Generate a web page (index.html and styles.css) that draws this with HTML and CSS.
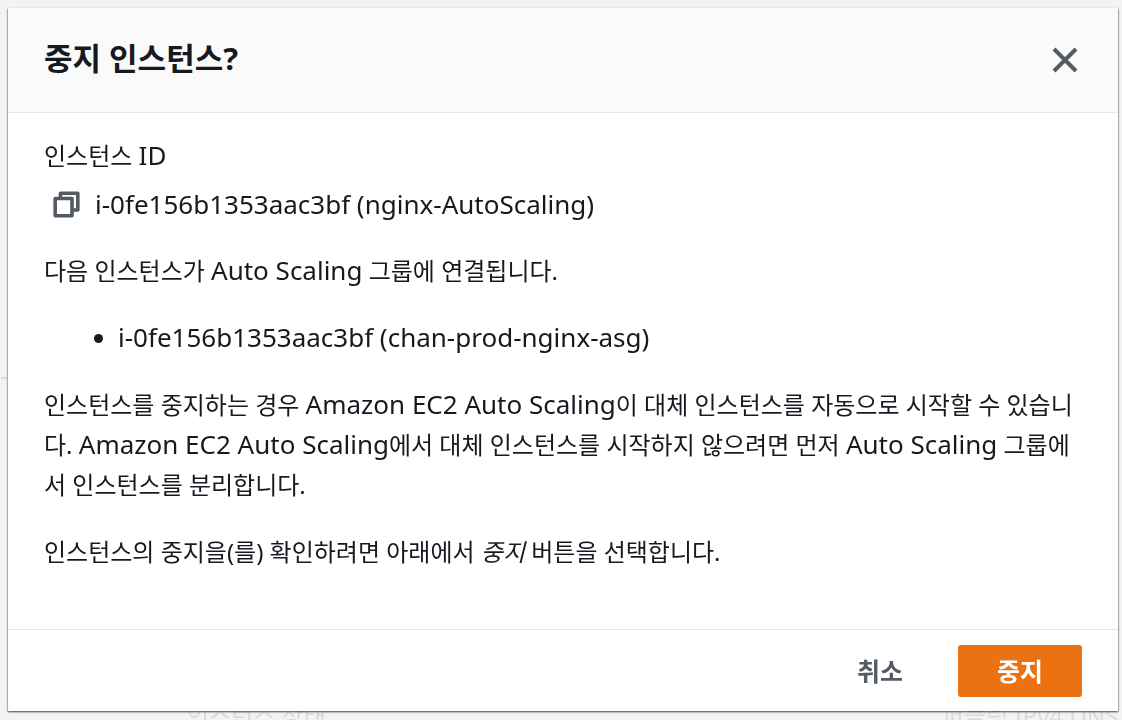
FILE: index.html
```html
<!DOCTYPE html>
<html lang="ko">
<head>
<meta charset="utf-8">
<meta name="viewport" content="width=device-width, initial-scale=1">
<title>중지 인스턴스?</title>
<link rel="stylesheet" href="styles.css">
</head>
<body>
<div class="backdrop" aria-hidden="true">
  <span class="ghost ghost-dash">-</span>
  <span class="ghost ghost-state">인스턴스 상태</span>
  <span class="ghost ghost-dns">퍼블릭 IPv4 DNS</span>
</div>
<div class="modal" role="dialog" aria-modal="true" aria-labelledby="modal-title">
  <header class="modal-header">
    <h1 class="modal-title" id="modal-title">중지 인스턴스?</h1>
    <button class="close-button" type="button" aria-label="닫기">
      <svg class="close-icon" viewBox="0 0 28 28" aria-hidden="true"><path d="M3 3l22 22M25 3L3 25"/></svg>
    </button>
  </header>
  <main class="modal-body">
    <div class="field">
      <div>인스턴스 <span class="latin">ID</span></div>
      <div class="instance">
        <button class="copy-button" type="button" aria-label="복사">
          <svg class="copy-icon" viewBox="0 0 27 27" aria-hidden="true"><path d="M7.500 7.500V2.200H24.800V19H19M2.200 7.500H19V24.800H2.200z"/></svg>
        </button>
        <span class="latin">i-0fe156b1353aac3bf (nginx-AutoScaling)</span>
      </div>
    </div>
    <p class="text">다음 인스턴스가 <span class="latin">Auto Scaling</span> 그룹에 연결됩니다.</p>
    <ul class="groups">
      <li><span class="latin">i-0fe156b1353aac3bf (chan-prod-nginx-asg)</span></li>
    </ul>
    <p class="text">인스턴스를 중지하는 경우 <span class="latin">Amazon EC2 Auto Scaling</span>이 대체 인스턴스를 자동으로 시작할 수 있습니다. <span class="latin">Amazon EC2 Auto Scaling</span>에서 대체 인스턴스를 시작하지 않으려면 먼저 <span class="latin">Auto Scaling</span> 그룹에서 인스턴스를 분리합니다.</p>
    <p class="text">인스턴스의 중지을(를) 확인하려면 아래에서 <em>중지</em> 버튼을 선택합니다.</p>
  </main>
  <footer class="modal-footer">
    <button class="button button-link" type="button">취소</button>
    <button class="button button-primary" type="button">중지</button>
  </footer>
</div>
</body>
</html>
```
FILE: styles.css
```css
* {
  box-sizing: border-box;
}

body {
  margin: 0;
  padding: 8px 4px 9px 8px;
  min-height: 100vh;
  display: flex;
  background: #f2f4f4;
  color: #16191f;
  font-family: "Noto Sans", "Noto Sans CJK KR", sans-serif;
  font-size: 24px;
  line-height: 40px;
  overflow: hidden;
}

.backdrop {
  position: fixed;
  inset: 0;
  overflow: hidden;
}

.ghost {
  position: absolute;
  color: #d9dcde;
  white-space: nowrap;
}

.ghost-dash {
  left: 0;
  top: 355px;
}

.ghost-state {
  left: 187px;
  top: 696px;
}

.ghost-dns {
  left: 942px;
  top: 696px;
}

.modal {
  position: relative;
  flex: 1;
  min-width: 0;
  display: flex;
  flex-direction: column;
  background: #fff;
  box-shadow: 0 1px 2px rgba(0, 28, 36, 0.6), 1px 1px 1px rgba(0, 28, 36, 0.15), -1px 1px 1px rgba(0, 28, 36, 0.15);
}

.modal-header {
  display: flex;
  align-items: flex-end;
  justify-content: space-between;
  padding: 30px 35px 34px 36px;
  background: #fafafa;
  border-bottom: 1px solid #e4e9e9;
}

.modal-title {
  margin: 0;
  font-size: 31px;
  font-weight: 700;
  line-height: 40px;
}

button {
  margin: 0;
  padding: 0;
  border: 0;
  background: none;
  color: #545b64;
  font: inherit;
  cursor: pointer;
}

.close-button {
  display: flex;
  padding: 4px;
}

.close-icon {
  width: 28px;
  height: 28px;
  fill: none;
  stroke: currentColor;
  stroke-width: 4;
}

.modal-body {
  flex: 1;
  display: flex;
  flex-direction: column;
  gap: 27px;
  padding: 23px 36px;
}

.field {
  display: flex;
  flex-direction: column;
  gap: 8px;
}

.instance {
  display: flex;
  align-items: center;
  gap: 15px;
  height: 40px;
  padding-left: 9px;
}

.copy-button {
  display: flex;
}

.copy-icon {
  width: 27px;
  height: 27px;
  fill: none;
  stroke: currentColor;
  stroke-width: 3.6;
  stroke-linejoin: round;
}

.latin {
  font-size: 26px;
  line-height: 1;
}

.text {
  margin: 0;
  word-break: break-all;
}

.groups {
  margin: 0;
  padding-left: 74px;
}

.modal-footer {
  display: flex;
  justify-content: flex-end;
  gap: 16px;
  padding: 15px 36px 14px;
  border-top: 1px solid #e4e6e6;
}

.button {
  padding: 6px 39px;
  border-radius: 3px;
  font-size: 25px;
  font-weight: 700;
}

.button-primary {
  background: #ec7211;
  color: #fff;
}
```
